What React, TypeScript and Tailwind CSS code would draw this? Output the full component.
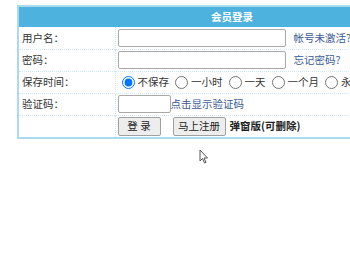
import { useState } from 'react'

const font = { fontFamily: '"Noto Sans CJK SC", "Microsoft YaHei", sans-serif' }

export default function App() {
  const [keep, setKeep] = useState('0')

  const options = [
    ['0', '不保存'],
    ['1', '一小时'],
    ['2', '一天'],
    ['3', '一个月'],
    ['4', '永久'],
  ]

  return (
    <div className="relative w-[350px] h-[280px] overflow-hidden bg-white text-[10.5px] text-[#333]" style={font}>
      <div className="pt-[5px] pl-[17px]">
        <table className="w-[430px] border-2 border-[#a9daf0] border-collapse">
          <tbody>
            <tr>
              <th colSpan={2} className="h-[21px] bg-[#4db2dd] text-white font-bold text-[10.5px] text-center">
                会员登录
              </th>
            </tr>
            <tr className="h-[22px] border-b border-dotted border-[#cfeaf6]">
              <td className="w-[97px] pl-[3px] border-r border-dotted border-[#cfeaf6]">用户名：</td>
              <td className="pl-[2px]">
                <div className="flex items-center">
                  <input className="w-[168px] h-[18px] border border-[#a9a9a9] rounded-[2px]" />
                  <a className="ml-[8px] text-[#3a5a96]">帐号未激活?</a>
                </div>
              </td>
            </tr>
            <tr className="h-[22px] border-b border-dotted border-[#cfeaf6]">
              <td className="pl-[3px] border-r border-dotted border-[#cfeaf6]">密码：</td>
              <td className="pl-[2px]">
                <div className="flex items-center">
                  <input type="password" className="w-[168px] h-[18px] border border-[#a9a9a9] rounded-[2px]" />
                  <a className="ml-[8px] text-[#3a5a96]">忘记密码?</a>
                </div>
              </td>
            </tr>
            <tr className="h-[22px] border-b border-dotted border-[#cfeaf6]">
              <td className="pl-[3px] border-r border-dotted border-[#cfeaf6]">保存时间：</td>
              <td className="pl-[6px]">
                <div className="flex items-center whitespace-nowrap">
                  {options.map(([v, label]) => (
                    <label key={v} className="flex items-center mr-[6px]">
                      <input
                        type="radio"
                        name="keep"
                        checked={keep === v}
                        onChange={() => setKeep(v)}
                        className="w-[13px] h-[13px] m-0 mr-[3px] accent-[#0075ff]"
                      />
                      {label}
                    </label>
                  ))}
                </div>
              </td>
            </tr>
            <tr className="h-[22px] border-b border-dotted border-[#cfeaf6]">
              <td className="pl-[3px] border-r border-dotted border-[#cfeaf6]">验证码：</td>
              <td className="pl-[2px]">
                <div className="flex items-center">
                  <input className="w-[53px] h-[18px] border border-[#a9a9a9] rounded-[2px]" />
                  <a className="text-[#3a5a96]">点击显示验证码</a>
                </div>
              </td>
            </tr>
            <tr className="h-[23px]">
              <td className="border-r border-dotted border-[#cfeaf6]"></td>
              <td className="pl-[2px]">
                <div className="flex items-center">
                  <button className="w-[43px] h-[19px] border border-[#a0a0a0] rounded-[2px] bg-[#ededed] text-[10.5px] text-[#222]">
                    登 录
                  </button>
                  <button className="ml-[12px] w-[53px] h-[19px] border border-[#a0a0a0] rounded-[2px] bg-[#ededed] text-[10.5px] text-[#222]">
                    马上注册
                  </button>
                  <span className="ml-[4px] font-bold text-[#222]">弹窗版(可删除)</span>
                </div>
              </td>
            </tr>
          </tbody>
        </table>
      </div>
      <svg className="absolute left-[199px] top-[149px]" width="10" height="15" viewBox="0 0 10 15">
        <path d="M1 1 L1 12 L3.5 9.5 L5.5 14 L7 13.3 L5 9 L8.5 9 Z" fill="#fff" stroke="#555" strokeWidth="1" />
      </svg>
    </div>
  )
}
